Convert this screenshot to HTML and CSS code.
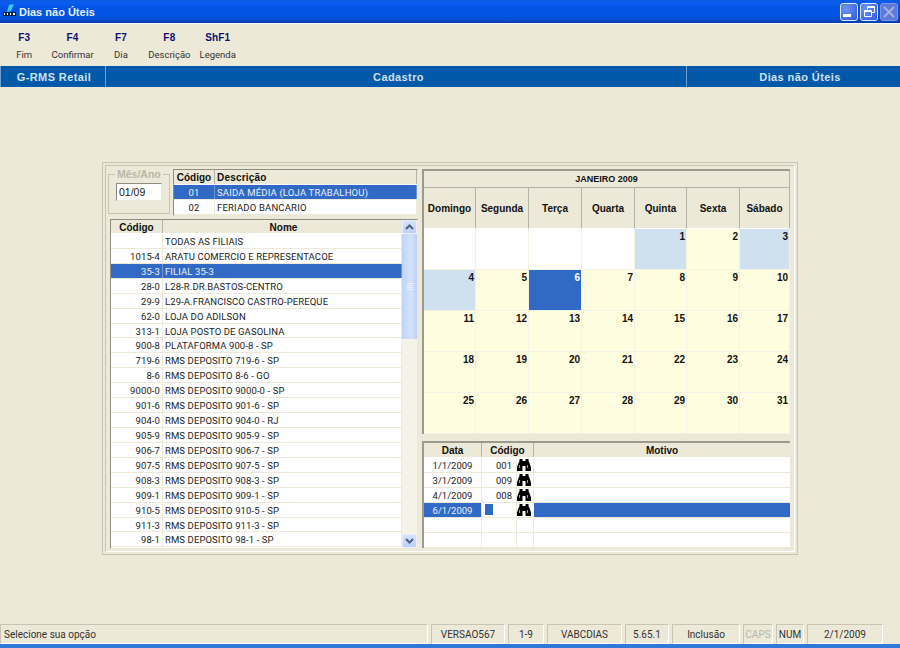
FILE: index.html
```html
<!DOCTYPE html>
<html lang="pt">
<head>
<meta charset="utf-8">
<title>Dias não Úteis</title>
<link rel="stylesheet" href="styles.css">
</head>
<body>
<svg class="defs" width="0" height="0" aria-hidden="true">
  <symbol id="bino" viewBox="0 0 14 12">
    <path fill="#000" d="M2.500 0h3v2h3V0h3v2l1 2 1.500 4.500V12H8.500V7h-3v5H0V8.500L1.500 4l1-2z"/>
    <path fill="#9a9a9a" d="M2 6h1v3H2zM10 6h1v3h-1z"/>
  </symbol>
</svg>
<div class="window">
  <header class="titlebar">
    <svg class="logo" width="16" height="16" viewBox="0 0 16 16"><path fill="#35d0e8" d="M7 1l5-1-3 7-4 1z"/><rect x="1" y="8" width="13" height="4" fill="#10204a"/><path fill="#fff" d="M2 9h1v2H2zM5 9h1v2H5zM8 9h1v2H8zM11 9h2v2h-2z"/></svg>
    <span class="title-text">Dias não Úteis</span>
    <div class="win-btns">
      <span class="win-btn"><svg width="16" height="16" viewBox="0 0 16 16"><rect x="2" y="10" width="8" height="3" fill="#fff"/></svg></span>
      <span class="win-btn"><svg width="16" height="16" viewBox="0 0 16 16"><path fill="none" stroke="#fff" d="M6.500 5.500V2.500h7v6h-3M3.500 6.500h7v6h-7z"/><path fill="none" stroke="#fff" d="M6.500 3.500h7M3.500 7.500h7"/></svg></span>
      <span class="win-btn off"><svg width="16" height="16" viewBox="0 0 16 16"><path stroke="#a8aede" stroke-width="2" d="M3 3l10 10M13 3L3 13"/></svg></span>
    </div>
  </header>

  <nav class="toolbar">
    <div class="tool"><b>F3</b><span>Fim</span></div>
    <div class="tool"><b>F4</b><span>Confirmar</span></div>
    <div class="tool"><b>F7</b><span>Dia</span></div>
    <div class="tool"><b>F8</b><span>Descrição</span></div>
    <div class="tool"><b>ShF1</b><span>Legenda</span></div>
  </nav>

  <div class="crumbs">
    <div class="crumb c1">G-RMS Retail</div>
    <div class="crumb c2">Cadastro</div>
    <div class="crumb c3">Dias não Úteis</div>
  </div>

  <main class="content">
    <section class="panel">
      <div class="panel-inner">
        <div class="left">
          <div class="left-top">
            <fieldset class="group">
              <legend>Mês/Ano</legend>
              <div class="input">01/09</div>
            </fieldset>
            <div class="grid reason">
              <div class="row head"><span class="c-cod">Código</span><span class="c-desc">Descrição</span></div>
              <div class="row sel"><span class="c-cod">01</span><span class="c-desc">SAIDA MÉDIA (LOJA TRABALHOU)</span></div>
              <div class="row"><span class="c-cod">02</span><span class="c-desc">FERIADO BANCARIO</span></div>
            </div>
          </div>
          <div class="grid stores">
            <div class="store-rows">
              <div class="row head"><span class="s-cod">Código</span><span class="s-nome">Nome</span></div>
              <div class="row"><span class="s-cod"></span><span class="s-nome">TODAS AS FILIAIS</span></div>
              <div class="row"><span class="s-cod">1015-4</span><span class="s-nome">ARATU COMERCIO E REPRESENTACOE</span></div>
              <div class="row sel"><span class="s-cod">35-3</span><span class="s-nome">FILIAL 35-3</span></div>
              <div class="row"><span class="s-cod">28-0</span><span class="s-nome">L28-R.DR.BASTOS-CENTRO</span></div>
              <div class="row"><span class="s-cod">29-9</span><span class="s-nome">L29-A.FRANCISCO CASTRO-PEREQUE</span></div>
              <div class="row"><span class="s-cod">62-0</span><span class="s-nome">LOJA DO ADILSON</span></div>
              <div class="row"><span class="s-cod">313-1</span><span class="s-nome">LOJA POSTO DE GASOLINA</span></div>
              <div class="row"><span class="s-cod">900-8</span><span class="s-nome">PLATAFORMA 900-8 - SP</span></div>
              <div class="row"><span class="s-cod">719-6</span><span class="s-nome">RMS DEPOSITO 719-6 - SP</span></div>
              <div class="row"><span class="s-cod">8-6</span><span class="s-nome">RMS DEPOSITO 8-6 - GO</span></div>
              <div class="row"><span class="s-cod">9000-0</span><span class="s-nome">RMS DEPOSITO 9000-0 - SP</span></div>
              <div class="row"><span class="s-cod">901-6</span><span class="s-nome">RMS DEPOSITO 901-6 - SP</span></div>
              <div class="row"><span class="s-cod">904-0</span><span class="s-nome">RMS DEPOSITO 904-0 - RJ</span></div>
              <div class="row"><span class="s-cod">905-9</span><span class="s-nome">RMS DEPOSITO 905-9 - SP</span></div>
              <div class="row"><span class="s-cod">906-7</span><span class="s-nome">RMS DEPOSITO 906-7 - SP</span></div>
              <div class="row"><span class="s-cod">907-5</span><span class="s-nome">RMS DEPOSITO 907-5 - SP</span></div>
              <div class="row"><span class="s-cod">908-3</span><span class="s-nome">RMS DEPOSITO 908-3 - SP</span></div>
              <div class="row"><span class="s-cod">909-1</span><span class="s-nome">RMS DEPOSITO 909-1 - SP</span></div>
              <div class="row"><span class="s-cod">910-5</span><span class="s-nome">RMS DEPOSITO 910-5 - SP</span></div>
              <div class="row"><span class="s-cod">911-3</span><span class="s-nome">RMS DEPOSITO 911-3 - SP</span></div>
              <div class="row"><span class="s-cod">98-1</span><span class="s-nome">RMS DEPOSITO 98-1 - SP</span></div>
            </div>
            <div class="scrollbar">
              <div class="sb-btn"><svg width="9" height="6" viewBox="0 0 9 6"><path fill="none" stroke="#4d6185" stroke-width="2" d="M1 5l3.500-3.500L8 5"/></svg></div>
              <div class="sb-thumb"><i></i><i></i><i></i><i></i></div>
              <div class="sb-track"></div>
              <div class="sb-btn"><svg width="9" height="6" viewBox="0 0 9 6"><path fill="none" stroke="#4d6185" stroke-width="2" d="M1 1l3.500 3.500L8 1"/></svg></div>
            </div>
          </div>
        </div>

        <div class="right">
          <div class="calendar">
            <div class="cal-title">JANEIRO 2009</div>
            <div class="cal-grid">
              <div class="dow">Domingo</div><div class="dow">Segunda</div><div class="dow">Terça</div><div class="dow">Quarta</div><div class="dow">Quinta</div><div class="dow">Sexta</div><div class="dow">Sábado</div>
              <div class="day blank"></div><div class="day blank"></div><div class="day blank"></div><div class="day blank"></div><div class="day off">1</div><div class="day">2</div><div class="day off">3</div>
              <div class="day off">4</div><div class="day">5</div><div class="day today">6</div><div class="day">7</div><div class="day">8</div><div class="day">9</div><div class="day">10</div>
              <div class="day">11</div><div class="day">12</div><div class="day">13</div><div class="day">14</div><div class="day">15</div><div class="day">16</div><div class="day">17</div>
              <div class="day">18</div><div class="day">19</div><div class="day">20</div><div class="day">21</div><div class="day">22</div><div class="day">23</div><div class="day">24</div>
              <div class="day">25</div><div class="day">26</div><div class="day">27</div><div class="day">28</div><div class="day">29</div><div class="day">30</div><div class="day">31</div>
            </div>
          </div>
          <div class="grid days">
            <div class="row head"><span class="d-data">Data</span><span class="d-cod-h">Código</span><span class="d-mot">Motivo</span></div>
            <div class="row"><span class="d-data">1/1/2009</span><span class="d-cod">001</span><span class="d-bin"><svg width="14" height="12"><use href="#bino"/></svg></span><span class="d-mot"></span></div>
            <div class="row"><span class="d-data">3/1/2009</span><span class="d-cod">009</span><span class="d-bin"><svg width="14" height="12"><use href="#bino"/></svg></span><span class="d-mot"></span></div>
            <div class="row"><span class="d-data">4/1/2009</span><span class="d-cod">008</span><span class="d-bin"><svg width="14" height="12"><use href="#bino"/></svg></span><span class="d-mot"></span></div>
            <div class="row editing"><span class="d-data">6/1/2009</span><span class="d-cod"><i class="caret"></i></span><span class="d-bin"><svg width="14" height="12"><use href="#bino"/></svg></span><span class="d-mot"></span></div>
            <div class="row"><span class="d-data"></span><span class="d-cod"></span><span class="d-bin"></span><span class="d-mot"></span></div>
            <div class="row"><span class="d-data"></span><span class="d-cod"></span><span class="d-bin"></span><span class="d-mot"></span></div>
          </div>
        </div>
      </div>
    </section>
  </main>

  <footer class="status">
    <div class="cell msg">Selecione sua opção</div>
    <div class="cell">VERSAO567</div>
    <div class="cell">1-9</div>
    <div class="cell">VABCDIAS</div>
    <div class="cell">5.65.1</div>
    <div class="cell">Inclusão</div>
    <div class="cell dim">CAPS</div>
    <div class="cell">NUM</div>
    <div class="cell">2/1/2009</div>
  </footer>
  <div class="bottom-edge"></div>
</div>
</body>
</html>
```
FILE: styles.css
```css
* { box-sizing: border-box; }
html, body { margin: 0; padding: 0; }
body {
  width: 900px;
  height: 648px;
  overflow: hidden;
  background: #ece9d8;
  font-family: Roboto, "Liberation Sans", Arial, sans-serif;
  font-size: 9.500px;
  color: #222;
}
.defs { position: absolute; }
.window { width: 900px; height: 648px; display: flex; flex-direction: column; }

/* Title bar */
.titlebar {
  height: 23px;
  flex: none;
  display: flex;
  align-items: center;
  padding: 0 2px 0 2px;
  background: linear-gradient(#0a5ce0 0, #0a5cf0 3px, #0253e6 8px, #0252e0 17px, #0a4ccc 20px, #0338a8 23px);
  color: #fff;
}
.logo { flex: none; margin-right: 1px; }
.title-text { font: bold 11px "Liberation Sans", sans-serif; color: #e8f0ff; }
.win-btns { margin-left: auto; display: flex; gap: 2px; }
.win-btn {
  width: 18px; height: 18px;
  border: 1px solid #dfe8ff;
  border-radius: 3px;
  background: radial-gradient(circle at 30% 30%, #6e96f4, #2f58dc);
  display: flex; align-items: center; justify-content: center;
}
.win-btn.off { background: #5f7ad8; border-color: #7e94e0; }

/* Toolbar */
.toolbar { height: 43px; flex: none; display: flex; border-top: 1px solid #fff; }
.tool { width: 48.400px; display: flex; flex-direction: column; align-items: center; padding-top: 8px; }
.tool b { font: bold 10px "Liberation Sans", sans-serif; letter-spacing: .2px; color: #101070; line-height: 12px; }
.tool span { margin-top: 5px; font-size: 9.500px; line-height: 12px; color: #333; white-space: nowrap; }

/* Blue section bar */
.crumbs { height: 21px; flex: none; display: grid; grid-template-columns: 106px 581px 213px; background: #0058a8; }
.crumb {
  display: flex; align-items: center; justify-content: center;
  font: bold 11px "Liberation Sans", sans-serif;
  letter-spacing: .4px;
  color: #cfe0ee;
  border-right: 1px solid #6da0d0;
}
.crumb.c1 { border-left: 1px solid #6da0d0; padding-left: 2px; }
.crumb.c2 { padding-left: 5px; }
.crumb.c3 { border-right: 0; padding-left: 13px; }

/* Main */
.content { flex: 1; padding: 75px 0 0 102px; }
.panel { width: 696px; height: 393px; border: 1px solid #c8c5b2; padding: 2px; }
.panel-inner { height: 100%; border: 1px solid #c8c5b2; border-right-color: #fff; border-bottom-color: #fff; padding: 3px 4px 0; display: grid; grid-template-columns: 308px 368px; column-gap: 4px; background: #ece9d8; }
.left { display: flex; flex-direction: column; }
.left-top { height: 47px; display: flex; margin-left: -2px; }
.group {
  width: 62px; height: 45px; margin: 0 3px 0 0; padding: 0 0 0 7px;
  border: 1px solid #c8c5b2; min-width: 0;
}
.group legend { padding: 0 2px; margin-left: -1px; font: bold 10.500px "Liberation Sans", sans-serif; color: #b9b7a8; line-height: 10px; }
.input {
  width: 46px; height: 18px; margin-top: 4px; padding-left: 2px;
  background: #fff; border: 1px solid #8e8c7e; border-right-color: #e8e6d8; border-bottom-color: #e8e6d8;
  font: 10.500px/16px "Liberation Sans", sans-serif;
}

.grid { border: 1px solid #8f8d7f; border-right-color: #ece9d8; border-bottom-color: #ece9d8; background: #fff; letter-spacing: .1px; }
.row { height: 15px; display: flex; border-bottom: 1px solid #ece9d8; line-height: 15px; white-space: nowrap; overflow: hidden; }
.row > span { display: block; border-right: 1px solid #ece9d8; height: 100%; }
.row.head { background: #ece9d8; border-bottom: 1px solid #fff; font: bold 10px/15px "Liberation Sans", sans-serif; letter-spacing: 0; color: #111; }
.row.head > span { border-right: 1px solid #b4b2a2; text-align: center; }
.row.sel { background: #316ac5; color: #e8effa; }
.row.sel > span { border-right-color: #6d93d3; }

.reason { width: 245px; height: 47px; }
.reason .c-desc { letter-spacing: .18px; }
.c-cod { width: 41px; flex: none; text-align: center; }
.c-desc { flex: 1; padding-left: 2px; }
.reason .head .c-desc { text-align: left; }

.stores { width: 308px; height: 330px; margin-top: 3px; display: flex; }
.store-rows { flex: 1; min-width: 0; }
.store-rows .row { height: 14.930px; }
.store-rows .row.head { height: 14px; }
.s-cod { width: 52px; flex: none; text-align: right; padding-right: 2px; }
.s-nome { flex: 1; padding-left: 2px; }
.stores .head .s-cod { text-align: center; padding-right: 0; }
.stores .head .s-nome { text-align: center; border-right: 0; }

.scrollbar { width: 15px; flex: none; display: flex; flex-direction: column; background: #f4f3ea; }
.sb-btn { height: 14px; flex: none; display: flex; align-items: center; justify-content: center; background: linear-gradient(#d6e2fa, #bcd0f6); border: 1px solid #e8eefc; border-radius: 2px; }
.sb-thumb { height: 105px; flex: none; background: linear-gradient(90deg, #c0d4f8, #d4e2fc 60%, #bccff5); display: flex; flex-direction: column; align-items: center; justify-content: center; gap: 1px; }
.sb-thumb i { display: block; width: 6px; height: 1px; background: #e8f0ff; }
.sb-track { flex: 1; }

/* Calendar */
.calendar { border: 2px solid #9c9a8c; border-right: 0; border-bottom: 0; width: 368px; }
.cal-title { height: 17px; background: #ece9d8; border-right: 1px solid #b4b2a2; border-bottom: 1px solid #b4b2a2; text-align: center; font: bold 9px/16px "Liberation Sans", sans-serif; color: #111; }
.cal-grid { display: grid; grid-template-columns: 52px 53px 53px 53px 52px 53px 50px; grid-template-rows: repeat(6, 41px); }
.dow {
  display: flex; align-items: center; justify-content: center;
  background: #ece9d8; border-right: 1px solid #b4b2a2; border-bottom: 1px solid #fff;
  font: bold 10px "Liberation Sans", sans-serif; color: #111;
}
.day { background: #fffde0; border-right: 1px solid #f4f2e4; border-bottom: 1px solid #f4f2e4; text-align: right; padding: 2px 1px 0 0; font: bold 10px/12px "Liberation Sans", sans-serif; color: #111; }
.day.blank { background: #fff; }
.day.off { background: #cfe0ef; }
.day.today { background: #316ac5; color: #fff; }

.days { width: 368px; height: 107px; margin-top: 7px; border-width: 2px 0 0 2px; border-color: #9c9a8c; letter-spacing: 0; }
.d-data { width: 58px; flex: none; text-align: center; }
.d-cod-h { width: 52px; flex: none; }
.d-cod { width: 35px; flex: none; text-align: right; padding-right: 4px; }
.d-bin { width: 17px; flex: none; display: flex !important; align-items: center; justify-content: flex-start; background: #fff; }
.d-mot { flex: 1; border-right: 0 !important; }
.row.editing { background: #fff; }
.row.editing .d-data { background: #316ac5; color: #e8effa; }
.row.editing .d-mot { background: #316ac5; margin-left: -1px; border-left: 1px solid #fff; }
.row.editing .d-cod { background: #fff; padding: 1px 0 0 3px; }
.caret { display: block; width: 8px; height: 11px; background: #316ac5; }

/* Status bar */
.status { height: 20px; flex: none; display: grid; grid-template-columns: 428px 74px 36px 75px 44px 68px 30px 28px 76px; column-gap: 3px; }
.cell { border: 1px solid #c8c5b2; border-right-color: #fff; border-bottom-color: #fff; display: flex; align-items: center; justify-content: center; font-size: 10px; color: #333; white-space: nowrap; }
.cell.msg { justify-content: flex-start; padding-left: 3px; }
.cell.dim { color: #b8b6a6; }
.bottom-edge { height: 4px; flex: none; background: #2f7ad8; }
```
